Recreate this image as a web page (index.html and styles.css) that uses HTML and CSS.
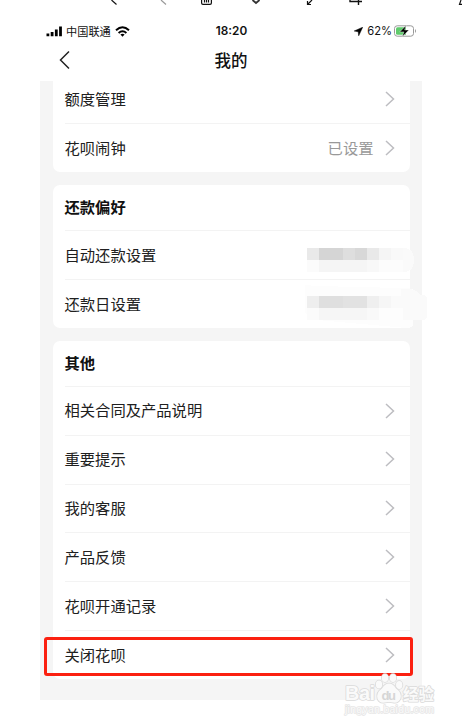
FILE: index.html
```html
<!DOCTYPE html>
<html lang="zh-CN">
<head>
<meta charset="utf-8">
<title>我的</title>
<link rel="stylesheet" href="styles.css">
</head>
<body>
<svg class="toolbar" width="462" height="8" viewBox="0 0 462 8" fill="none" stroke="#111" stroke-width="1.2">
  <path d="M111.500 0l5 4.500"/>
  <path d="M161 0l5 4.500" stroke="#999"/>
  <path d="M201.600 0v3q0 1.400 1.400 1.400h7q1.400 0 1.400-1.400V0M204.500 0v2.500M206.500 0v2.500M208.500 0v2.500"/>
  <path d="M252.500 0l3.500 3 3.500-3" stroke="#333" stroke-width="1.800"/>
  <path d="M312 0l-4 4M307.500 1v3.500h3.500"/>
  <path d="M350 0v1.500h12M358.500 0v5" stroke-width="1.400"/>
  <path d="M461 0l-1.500 4.400h2.500"/>
</svg>
<main class="phone">
  <header class="status">
    <div class="status-left">
      <svg width="17" height="11" viewBox="0 0 17 11"><path d="M.5 7.500h2.800v2.800H.500zM4.700 6h2.800v4.300H4.700zM8.900 3.500h2.800v6.800H8.900zM13.100.500h2.800v9.800h-2.800z" fill="#000"/></svg>
      <span class="carrier">中国联通</span>
      <svg class="wifi" width="15" height="11" viewBox="0 0 15 11" fill="none" stroke="#000" stroke-width="2"><path d="M1 4.200q6.500-5.800 13 0M3.600 6.900q3.900-3.300 7.800 0"/><path d="M5.400 8.600q2.100-1.500 4.200 0l-2.100 2.100z" fill="#000" stroke="none"/></svg>
    </div>
    <span class="time">18:20</span>
    <div class="status-right">
      <svg width="9" height="9" viewBox="0 0 9 9"><path d="M8.700.200L.200 4l4 .700.500 4.100z" fill="#000" stroke="#000" stroke-width=".5"/></svg>
      <span class="percent">62%</span>
      <svg class="battery" width="23" height="12" viewBox="0 0 23 12"><rect x=".5" y=".8" width="19" height="10.400" rx="2.700" fill="#fff" stroke="#999"/><path d="M3.500 2.300H12v7.400H3.500Q2 9.700 2 8.200V3.800q0-1.500 1.500-1.500z" fill="#5fcb6c"/><path d="M21 4q2 2 0 4z" fill="#999"/><path d="M12 .5L5.700 6.900h4.200L8.300 11.700l6.600-6.700h-4.200z" fill="#000" stroke="#fff" stroke-width=".4"/></svg>
    </div>
  </header>
  <nav class="titlebar">
    <svg class="back" width="11" height="20" viewBox="0 0 11 20"><path d="M10 1.500L1.500 10l8.500 8.500" fill="none" stroke="#222" stroke-width="1.500"/></svg>
    <h1>我的</h1>
  </nav>
  <div class="content">
    <section class="card card-first">
      <div class="row row-cut"><span>额度管理</span><svg class="chevron" viewBox="0 0 10 16"><path d="M1 1l7.500 7L1 15"/></svg></div>
      <div class="row row-low"><span>花呗闹钟</span><span class="value">已设置</span><svg class="chevron" viewBox="0 0 10 16"><path d="M1 1l7.500 7L1 15"/></svg></div>
    </section>
    <section class="card card-repay">
      <h2>还款偏好</h2>
      <div class="row row-low"><span>自动还款设置</span></div>
      <div class="row row-low"><span>还款日设置</span></div>
      <svg class="mosaic" width="124" height="96" viewBox="0 0 124 96" shape-rendering="crispEdges">
        <path d="M94 7h6q9 1 9 12t-9 12h-6z" fill="#fafafa"/>
        <path d="M0 44V72l12 7 90 8q6 0 6-4V79h8q4 0 4-4V58q0-4-4-4-9-9-20-7L12 45z" fill="#fdfdfd"/>
        <path d="M96 48q14-2 19 6h3q4 0 4 4v17q0 4-4 4H96z" fill="#fafafa"/>
        <path d="M2 7h12v12H2z" fill="#e9e9e9"/><path d="M14 7h24v12H14z" fill="#d5d5d5"/><path d="M38 7h12v12H38z" fill="#dedede"/><path d="M50 7h12v12H50z" fill="#d8d8d8"/><path d="M62 7h12v12H62z" fill="#e9e9e9"/><path d="M74 7h12v12H74z" fill="#f5f5f5"/><path d="M86 7h12v12H86z" fill="#f9f9f9"/>
        <path d="M2 19h12v12H2z" fill="#fbfbfb"/><path d="M14 19h48v12H14z" fill="#f5f5f5"/><path d="M62 19h12v12H62z" fill="#f8f8f8"/><path d="M74 19h24v12H74z" fill="#fcfcfc"/>
        <path d="M2 55h12v12H2z" fill="#eee"/><path d="M14 55h24v12H14z" fill="#dfdfdf"/><path d="M38 55h24v12H38z" fill="#e2e2e2"/><path d="M62 55h12v12H62z" fill="#efefef"/><path d="M74 55h12v12H74z" fill="#f6f6f6"/><path d="M86 55h12v12H86z" fill="#fafafa"/>
        <path d="M2 67h12v12H2z" fill="#fbfbfb"/><path d="M14 67h48v12H14z" fill="#f6f6f6"/><path d="M62 67h12v12H62z" fill="#f9f9f9"/><path d="M74 67h24v12H74z" fill="#fdfdfd"/>
      </svg>
    </section>
    <section class="card">
      <h2>其他</h2>
      <div class="row"><span>相关合同及产品说明</span><svg class="chevron" viewBox="0 0 10 16"><path d="M1 1l7.500 7L1 15"/></svg></div>
      <div class="row"><span>重要提示</span><svg class="chevron" viewBox="0 0 10 16"><path d="M1 1l7.500 7L1 15"/></svg></div>
      <div class="row"><span>我的客服</span><svg class="chevron" viewBox="0 0 10 16"><path d="M1 1l7.500 7L1 15"/></svg></div>
      <div class="row"><span>产品反馈</span><svg class="chevron" viewBox="0 0 10 16"><path d="M1 1l7.500 7L1 15"/></svg></div>
      <div class="row"><span>花呗开通记录</span><svg class="chevron" viewBox="0 0 10 16"><path d="M1 1l7.500 7L1 15"/></svg></div>
      <div class="row marked"><span>关闭花呗</span><svg class="chevron" viewBox="0 0 10 16"><path d="M1 1l7.500 7L1 15"/></svg></div>
    </section>
  </div>
</main>
<svg class="watermark" width="100" height="46" viewBox="0 0 100 46">
  <g fill="#fafafa" stroke="#dadada" stroke-width="1.600" paint-order="stroke" stroke-linejoin="round">
    <text class="wm-brand" x="3" y="28" textLength="30">Bai</text>
    <g><ellipse cx="37" cy="12.500" rx="3.200" ry="4"/><ellipse cx="43" cy="6" rx="3.200" ry="4"/><ellipse cx="51" cy="6" rx="3.200" ry="4"/><ellipse cx="57.200" cy="13" rx="3.200" ry="4"/><path d="M47 11.500q4 0 7 5 6 4 4.500 10-2 5-7.500 4-4-1-8 0-6 1-7.500-4-1.500-6 4.500-10 3-5 7-5z"/></g>
    <text class="wm-du" x="39.500" y="27.500" textLength="14.500">du</text>
    <text class="wm-cn" x="61" y="27.500" textLength="31">经验</text>
    <text class="wm-url" x="3" y="41" textLength="89">jingyan.baidu.com</text>
  </g>
</svg>
</body>
</html>
```
FILE: styles.css
```css
*, *::after { box-sizing: border-box; }
body {
  margin: 0;
  width: 462px;
  height: 727px;
  overflow: hidden;
  position: relative;
  background: #fff;
  color: #202020;
  font-family: "Noto Sans CJK SC", sans-serif;
}
.toolbar { display: block; }
.phone { width: 382px; margin-left: 40px; }
.status {
  display: grid;
  grid-template-columns: 1fr auto 1fr;
  align-items: center;
  height: 30px;
  margin-top: 8px;
  padding: 0 5px 0 6px;
  margin-bottom: -8px;
  line-height: 16px;
  color: #111;
}
.status-left, .status-right { display: flex; align-items: center; }
.status-left { gap: 3px; }
.status-right { justify-content: flex-end; gap: 4px; }
.carrier { font-size: 11.2px; }
.wifi { margin-left: 1px; }
.time { font: 600 11.8px/16px Inter, sans-serif; }
.percent { font: 400 11.2px/16px Inter, sans-serif; }
.battery { margin-left: -2px; }
.titlebar {
  display: grid;
  grid-template-columns: 1fr auto 1fr;
  align-items: center;
  height: 43px;
  padding: 1px 19px 0;
}
h1 { margin: 0; font-size: 16.5px; line-height: 24px; font-weight: 500; color: #111; }
.content {
  display: flex;
  flex-direction: column;
  gap: 13px;
  height: 619px;
  padding: 0 12.5px;
  background: #f5f5f5;
}
.card {
  position: relative;
  padding-left: 12px;
  background: #fff;
  border-radius: 7px;
}
.card-first { border-radius: 0 0 7px 7px; }
h2 {
  margin: 0;
  height: 45.2px;
  font-size: 15.3px;
  line-height: 43px;
  font-weight: 700;
  color: #111;
}
.row {
  display: flex;
  align-items: center;
  height: 48.85px;
  padding-right: 15px;
  padding-bottom: 3px;
  border-top: 1px solid #f3f3f3;
  font-size: 15.3px;
  line-height: 24px;
}
.row-low { padding-bottom: 2px; }
.row-cut { height: 42px; padding-bottom: 8px; border-top: 0; }
.value { margin-left: auto; margin-right: 11px; color: #999; }
.chevron {
  width: 10px;
  height: 16px;
  margin-left: auto;
  margin-top: 2.5px;
  fill: none;
  stroke: #bdbdc1;
  stroke-width: 1.5;
}
.value + .chevron { margin-left: 0; margin-top: 1.5px; }
.mosaic { position: absolute; left: 252.5px; top: 56px; }
.marked { position: relative; }
.marked::after {
  content: "";
  position: absolute;
  left: -20.5px;
  right: -3.5px;
  top: 6px;
  height: 39px;
  border: 3px solid #fb2010;
  border-radius: 3px;
}
.watermark { position: absolute; left: 342px; top: 672px; }
.wm-brand { font: 700 20px "Liberation Sans", sans-serif; }
.wm-du { font: 700 13px "Liberation Sans", sans-serif; fill: #d6d6d6; stroke: none; }
.wm-cn { font: 700 15.5px "Noto Sans CJK SC", sans-serif; }
.wm-url { font: 400 10.5px "Liberation Sans", sans-serif; stroke: #e6e6e6; stroke-width: 1.6px; }
```
